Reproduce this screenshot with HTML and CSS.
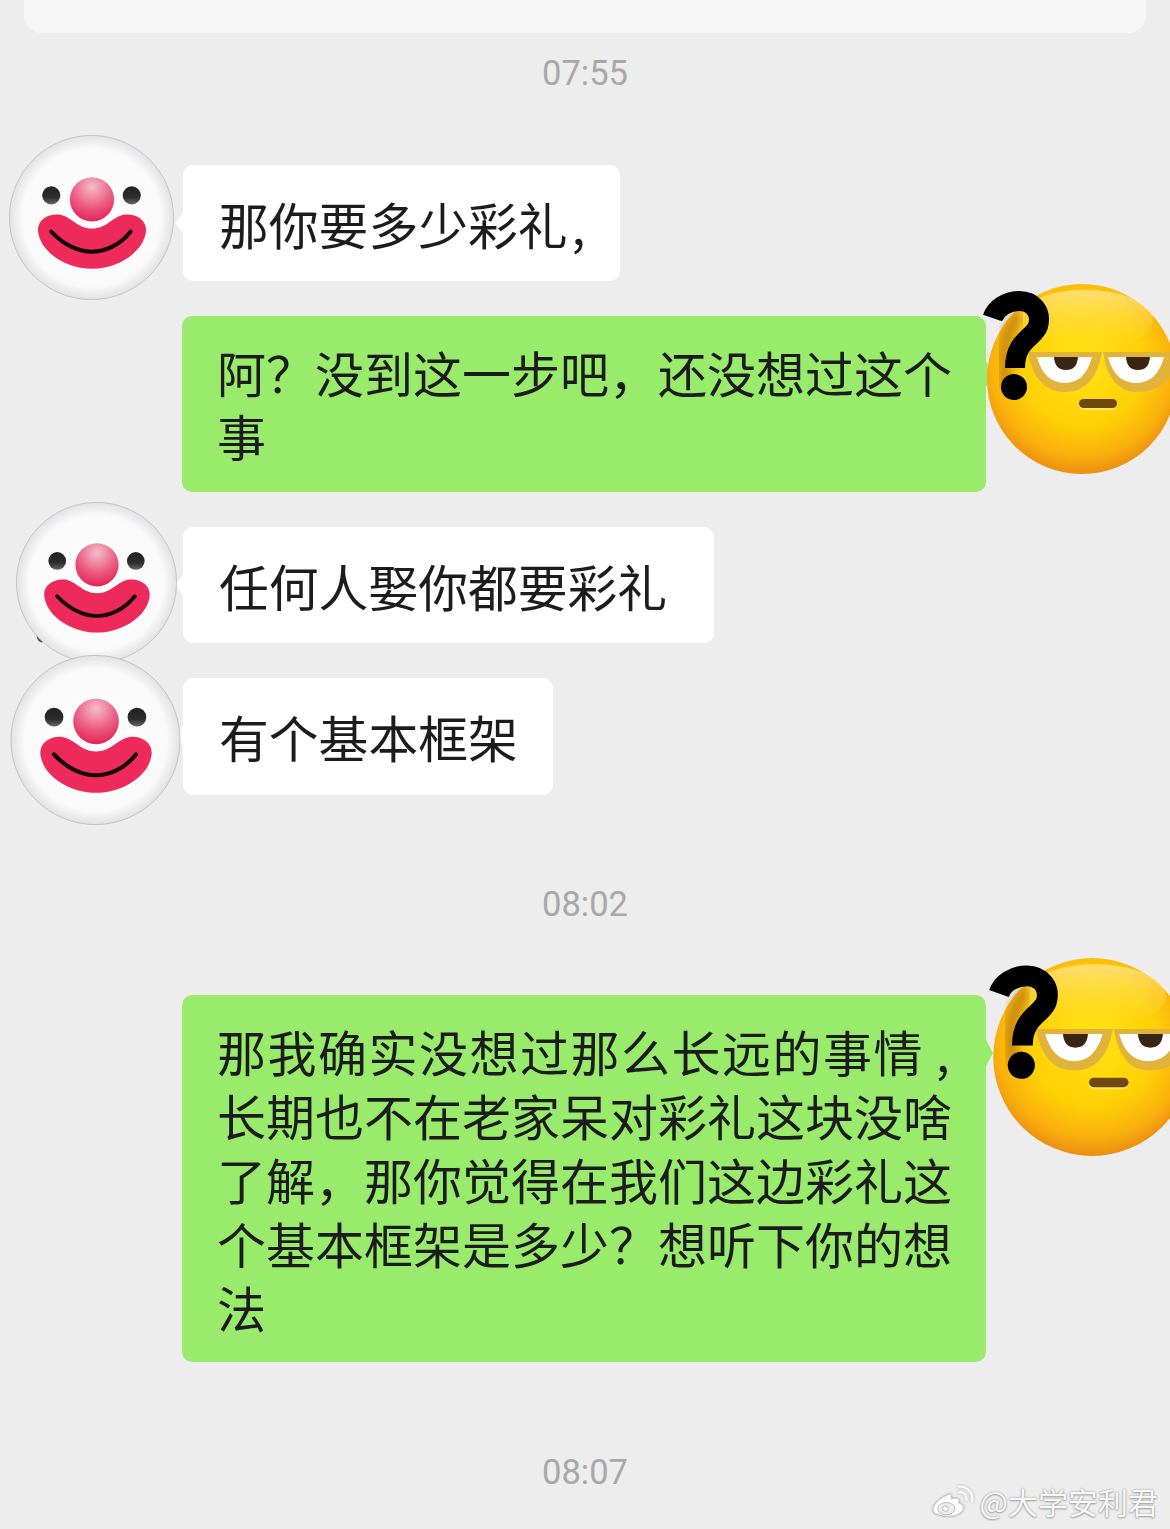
FILE: index.html
```html
<!DOCTYPE html>
<html lang="zh-CN">
<head>
    <meta charset="UTF-8">
    <meta name="viewport" content="width=device-width, initial-scale=1.0">
    <title>聊天记录</title>
    <link rel="stylesheet" href="styles.css">
</head>
<body>
    <svg class="defs" width="0" height="0">
        <defs>
            <radialGradient id="clownFace" cx="50%" cy="50%" r="50%">
                <stop offset="0%" stop-color="#ffffff"/>
                <stop offset="84%" stop-color="#fafafb"/>
                <stop offset="100%" stop-color="#e2e2e4"/>
            </radialGradient>
            <radialGradient id="clownNose" cx="50%" cy="22%" r="80%">
                <stop offset="0%" stop-color="#f4bccb"/>
                <stop offset="55%" stop-color="#ec5f84"/>
                <stop offset="100%" stop-color="#e61f56"/>
            </radialGradient>
            <linearGradient id="clownEye" x1="0" y1="0" x2="0" y2="1">
                <stop offset="0%" stop-color="#222"/>
                <stop offset="60%" stop-color="#2c2c2c"/>
                <stop offset="100%" stop-color="#666"/>
            </linearGradient>
            <radialGradient id="emojiFace" cx="50%" cy="42%" r="59%">
                <stop offset="0%" stop-color="#ffe414"/>
                <stop offset="55%" stop-color="#ffd006"/>
                <stop offset="82%" stop-color="#fab00c"/>
                <stop offset="100%" stop-color="#ea8a12"/>
            </radialGradient>
            <linearGradient id="emojiShine" x1="0" y1="0" x2="0" y2="1">
                <stop offset="0%" stop-color="#ffe9a0" stop-opacity="0.7"/>
                <stop offset="100%" stop-color="#ffe340" stop-opacity="0"/>
            </linearGradient>
            <filter id="soft" x="-40%" y="-40%" width="180%" height="180%">
                <feGaussianBlur stdDeviation="4"/>
            </filter>
            <symbol id="clown" viewBox="0 0 164 164">
                <circle cx="82" cy="82" r="81.6" fill="url(#clownFace)" stroke="#adadad" stroke-width="0.6"/>
                <circle cx="42" cy="60" r="9" fill="url(#clownEye)"/>
                <circle cx="122" cy="60" r="9" fill="url(#clownEye)"/>
                <path d="M29 97C27 85 38 78 50 79C62 81 68 93 82.5 93C97 93 103 81 115 79C127 78 138 85 136 97C133 117 108 133 82.5 133C57 133 32 117 29 97Z" fill="#ee2a5b"/>
                <path d="M42 96C55 110 70 116 82 116C95 116 110 110 121 96" fill="none" stroke="#140608" stroke-width="4" stroke-linecap="round"/>
                <circle cx="82.5" cy="64" r="22" fill="url(#clownNose)"/>
            </symbol>
            <symbol id="emoji" viewBox="-6 0 196 190">
                <circle cx="95" cy="95" r="95" fill="url(#emojiFace)"/>
                <ellipse cx="98" cy="36" rx="68" ry="30" fill="url(#emojiShine)"/>
                <path d="M41 68H115Q108 108 78 108Q48 108 41 68Z" fill="#e2b33a"/>
                <path d="M116 68H190V80Q178 108 150 108Q122 108 116 68Z" fill="#e2b33a"/>
                <path d="M50 73H105Q98 99 78 99Q57 99 50 73Z" fill="#fff"/>
                <path d="M121 73H177Q170 99 149 99Q128 99 121 73Z" fill="#fff"/>
                <path d="M67 73H91Q90 86 79 86Q68 86 67 73Z" fill="#3a2414"/>
                <path d="M139 73H163Q162 86 151 86Q140 86 139 73Z" fill="#3a2414"/>
                <rect x="92" y="116" width="38" height="10" rx="5" fill="#ffe76a"/>
                <rect x="92" y="115" width="38" height="9" rx="4.5" fill="#70490f"/>
                <path d="M30 34C18 50 14 74 20 100" fill="none" stroke="#a86a0a" stroke-width="12" stroke-linecap="round" opacity="0.6" filter="url(#soft)"/>
                <path d="M5.5 34C9 24 20 17 32 17C46 17 55 28 51 42C47 54 28 56 28 84" fill="none" stroke="#000" stroke-width="20"/>
                <circle cx="27" cy="103" r="13" fill="#000"/>
            </symbol>
        </defs>
    </svg>

    <div class="top-card"></div>
    <div class="time time-first">07:55</div>

    <div class="row row-first">
        <div class="slot"><svg class="clown clown-a"><use href="#clown"/></svg></div>
        <div class="bubble bubble-in">那你要多少彩礼<span class="comma">,</span></div>
    </div>

    <div class="row row-gap">
        <div class="slot"></div>
        <div class="bubble bubble-out bubble-short">阿&#xFF1F;没到这一步吧&#xFF0C;还没想过这个事</div>
        <div class="slot"><svg class="emoji emoji-a"><use href="#emoji"/></svg></div>
    </div>

    <div class="row row-gap">
        <div class="slot">
            <svg class="clown clown-b" viewBox="0 0 164 164">
                <ellipse cx="26" cy="136" rx="5" ry="7" fill="#555"/>
                <use href="#clown" width="164" height="164"/>
            </svg>
        </div>
        <div class="bubble bubble-in bubble-roomy">任何人娶你都要彩礼</div>
    </div>

    <div class="row row-gap">
        <div class="slot"><svg class="clown clown-c"><use href="#clown"/></svg></div>
        <div class="bubble bubble-in bubble-tall">有个基本框架</div>
    </div>

    <div class="time time-second">08:02</div>

    <div class="row row-after-time">
        <div class="slot"></div>
        <div class="bubble bubble-out"><span class="loose">那我确实没想过那么长远的事情</span><span class="comma comma-wide">,</span>长期也不在老家呆对彩礼这块没啥了解&#xFF0C;那你觉得在我们这边彩礼这个基本框架是多少&#xFF1F;想听下你的想法</div>
        <div class="slot"><svg class="emoji emoji-b"><use href="#emoji"/></svg></div>
    </div>

    <div class="time time-third">08:07</div>

    <div class="watermark">
        <svg class="weibo" viewBox="0 0 44 32">
            <path d="M18 9C11 11 1 19 1 25C1 29 8 32 17 32C27 32 33 27 33 23C33 20 30 19 28 18C29 15 28 13 25 13C23 13 21 14 20 14C21 11 20 8 18 9Z" fill="#fff" stroke="#c4c4c4" stroke-width="1"/>
            <ellipse cx="15" cy="24" rx="9" ry="6.5" fill="#ededed" stroke="#b5b5b5" stroke-width="1"/>
            <circle cx="14" cy="24" r="3" fill="#fff" stroke="#b5b5b5" stroke-width="1"/>
            <path d="M28 7C33 6 37 10 36 15" fill="none" stroke="#fff" stroke-width="2.4" stroke-linecap="round"/>
            <path d="M28 1C37 0 44 8 42 17" fill="none" stroke="#fff" stroke-width="2.4" stroke-linecap="round"/>
        </svg>
        <span class="watermark-text">@大学安利君</span>
    </div>
</body>
</html>
```

FILE: styles.css
```css
html, body {
    height: 100%;
}
body {
    background-color: #ededed;
    color: #1c1c1c;
    font-family: "Noto Sans CJK SC", "Noto Sans", sans-serif;
    margin: 0;
    overflow: hidden;
    position: relative;
}
.defs {
    display: block;
    height: 0;
}
.top-card {
    height: 33px;
    margin: 0 24px;
    background-color: #f6f6f6;
    border-radius: 0 0 18px 18px;
}
.time {
    text-align: center;
    font-family: Roboto, "Noto Sans", sans-serif;
    font-size: 34.5px;
    line-height: 40px;
    color: #a8a8a8;
}
.time-first {
    margin-top: 20px;
}
.time-second {
    margin-top: 89px;
}
.time-third {
    margin-top: 90px;
}
.row {
    display: grid;
    grid-template-columns: 182px 804px 184px;
    align-items: start;
}
.row-first {
    margin-top: 72px;
}
.row-gap {
    margin-top: 35px;
}
.row-after-time {
    margin-top: 71px;
}
.slot {
    height: 0;
    position: relative;
    z-index: 1;
}
.clown,
.emoji {
    display: block;
}
.clown-a {
    width: 165px;
    height: 165px;
    margin: -30px 0 0 9px;
}
.clown-b {
    width: 161px;
    height: 161px;
    margin: -25px 0 0 16px;
}
.clown-c {
    width: 171px;
    height: 170px;
    margin: -23px 0 0 10px;
}
.emoji-a {
    width: 196px;
    height: 190px;
    margin: -32px 0 0 -5px;
}
.emoji-b {
    width: 204px;
    height: 198px;
    margin: -37px 0 0 1px;
}
.bubble {
    position: relative;
    box-sizing: border-box;
    border-radius: 10px;
    line-height: 64px;
}
.bubble-in {
    justify-self: start;
    margin-left: 1px;
    padding: 26px 35px 26px 36px;
    font-size: 49.8px;
    background-color: #fff;
}
.bubble-roomy {
    padding-right: 47px;
}
.bubble-tall {
    padding-bottom: 27px;
}
.bubble-in::before {
    content: "";
    position: absolute;
    left: -8px;
    top: 48px;
    border-style: solid;
    border-width: 10px 8px 10px 0;
    border-color: transparent #fff transparent transparent;
}
.bubble-out {
    padding: 24px 32px 23px 35px;
    font-size: 49px;
    background-color: #99ec6b;
}
.bubble-short {
    line-height: 63px;
    padding-bottom: 26px;
}
.bubble-out::after {
    content: "";
    position: absolute;
    right: -7px;
    top: 45px;
    border-style: solid;
    border-width: 13px 0 13px 7px;
    border-color: transparent transparent transparent #99ec6b;
}
.comma {
    margin-left: 4px;
}
.comma-wide {
    margin-left: 12px;
}
.loose {
    letter-spacing: 1.5px;
}
.watermark {
    position: absolute;
    right: 12px;
    bottom: 8px;
    display: flex;
    align-items: center;
    gap: 6px;
}
.weibo {
    width: 42px;
    height: 32px;
    filter: drop-shadow(0 0 1px #a0a0a0);
}
.watermark-text {
    font-size: 30px;
    line-height: 40px;
    color: #f7f7f7;
    text-shadow: 0 0 2px #8e8e8e, 0 1px 2px #a8a8a8;
}
```
